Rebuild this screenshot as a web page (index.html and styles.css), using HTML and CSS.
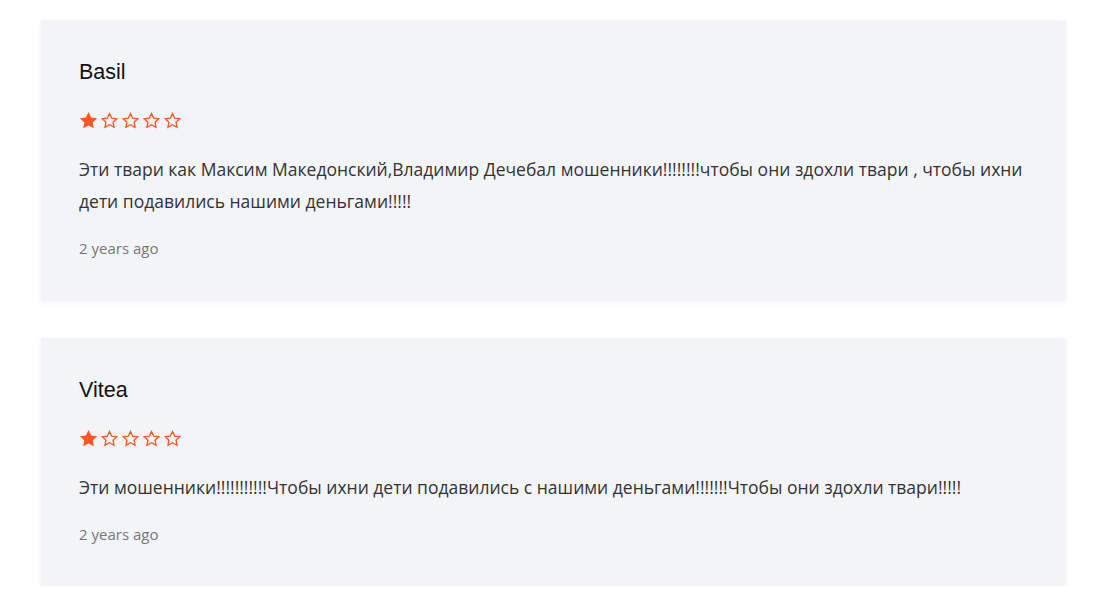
FILE: index.html
```html
<!DOCTYPE html>
<html lang="ru">
<head>
<meta charset="utf-8">
<link rel="stylesheet" href="styles.css">
</head>
<body>
<div class="reviews">
  <div class="card">
    <div class="name">Basil</div>
    <div class="stars">
      <svg class="star" viewBox="0 0 24 24"><path class="full" d="M12 1.2l3.3 6.9 7.6 1-5.6 5.3 1.5 7.5L12 18.2l-6.8 3.7 1.5-7.5-5.6-5.3 7.6-1z"/></svg>
      <svg class="star" viewBox="0 0 24 24"><path class="empty" d="M12 3.2l2.8 5.8 6.3.8-4.6 4.4 1.2 6.3L12 17.4l-5.7 3.1 1.2-6.3-4.6-4.4 6.3-.8z"/></svg>
      <svg class="star" viewBox="0 0 24 24"><path class="empty" d="M12 3.2l2.8 5.8 6.3.8-4.6 4.4 1.2 6.3L12 17.4l-5.7 3.1 1.2-6.3-4.6-4.4 6.3-.8z"/></svg>
      <svg class="star" viewBox="0 0 24 24"><path class="empty" d="M12 3.2l2.8 5.8 6.3.8-4.6 4.4 1.2 6.3L12 17.4l-5.7 3.1 1.2-6.3-4.6-4.4 6.3-.8z"/></svg>
      <svg class="star" viewBox="0 0 24 24"><path class="empty" d="M12 3.2l2.8 5.8 6.3.8-4.6 4.4 1.2 6.3L12 17.4l-5.7 3.1 1.2-6.3-4.6-4.4 6.3-.8z"/></svg>
    </div>
    <p class="text">Эти твари как Максим Македонский,Владимир Дечебал мошенники!!!!!!!!чтобы они здохли твари , чтобы ихни дети подавились нашими деньгами!!!!!</p>
    <div class="time">2 years ago</div>
  </div>
  <div class="card">
    <div class="name">Vitea</div>
    <div class="stars">
      <svg class="star" viewBox="0 0 24 24"><path class="full" d="M12 1.2l3.3 6.9 7.6 1-5.6 5.3 1.5 7.5L12 18.2l-6.8 3.7 1.5-7.5-5.6-5.3 7.6-1z"/></svg>
      <svg class="star" viewBox="0 0 24 24"><path class="empty" d="M12 3.2l2.8 5.8 6.3.8-4.6 4.4 1.2 6.3L12 17.4l-5.7 3.1 1.2-6.3-4.6-4.4 6.3-.8z"/></svg>
      <svg class="star" viewBox="0 0 24 24"><path class="empty" d="M12 3.2l2.8 5.8 6.3.8-4.6 4.4 1.2 6.3L12 17.4l-5.7 3.1 1.2-6.3-4.6-4.4 6.3-.8z"/></svg>
      <svg class="star" viewBox="0 0 24 24"><path class="empty" d="M12 3.2l2.8 5.8 6.3.8-4.6 4.4 1.2 6.3L12 17.4l-5.7 3.1 1.2-6.3-4.6-4.4 6.3-.8z"/></svg>
      <svg class="star" viewBox="0 0 24 24"><path class="empty" d="M12 3.2l2.8 5.8 6.3.8-4.6 4.4 1.2 6.3L12 17.4l-5.7 3.1 1.2-6.3-4.6-4.4 6.3-.8z"/></svg>
    </div>
    <p class="text">Эти мошенники!!!!!!!!!!!Чтобы ихни дети подавились с нашими деньгами!!!!!!!Чтобы они здохли твари!!!!!</p>
    <div class="time">2 years ago</div>
  </div>
</div>
</body>
</html>
```

FILE: styles.css
```css
html, body {
  margin: 0;
  padding: 0;
  background: #ffffff;
}

.reviews {
  display: flex;
  flex-direction: column;
  gap: 38px;
  width: 1025px;
  margin: 20px 0 0 41px;
}

.card {
  background: #f3f4f8;
  box-shadow: 0 2px 6px rgba(0, 0, 0, 0.06);
  padding: 40px 37px 42px 38px;
}

.name {
  font-family: "Liberation Sans", Arial, sans-serif;
  font-size: 21.5px;
  line-height: 25px;
  color: #111111;
}

.stars {
  display: flex;
  gap: 2px;
  height: 19px;
  margin-top: 26px;
}

.star {
  width: 19px;
  height: 19px;
  display: block;
}

.star .full {
  fill: #ff5722;
}

.star .empty {
  fill: none;
  stroke: #ff5722;
  stroke-width: 1.7;
  stroke-linejoin: miter;
}

.text {
  margin: 23px 0 0 0;
  font-family: "Open Sans", sans-serif;
  font-size: 17.5px;
  line-height: 32px;
  color: #333333;
}

.time {
  margin-top: 21px;
  font-family: "Open Sans", sans-serif;
  font-size: 15px;
  line-height: 20px;
  color: #777777;
}
```
